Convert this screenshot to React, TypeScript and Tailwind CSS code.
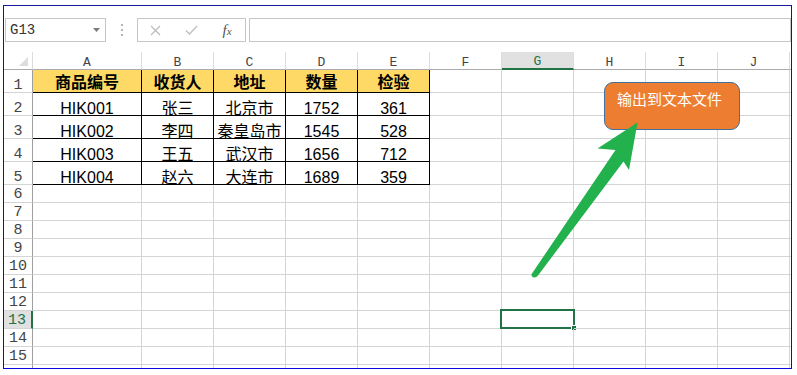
import React from 'react';

const COLS = ['A', 'B', 'C', 'D', 'E', 'F', 'G', 'H', 'I', 'J'];
const W = ['w-[109px]', 'w-[72px]', 'w-[72px]', 'w-[72px]', 'w-[72px]', 'w-[72px]', 'w-[72px]', 'w-[72px]', 'w-[72px]', 'w-[72px]'];

const HEAD = ['商品编号', '收货人', '地址', '数量', '检验'];
const DATA = [
  ['HIK001', '张三', '北京市', '1752', '361'],
  ['HIK002', '李四', '秦皇岛市', '1545', '528'],
  ['HIK003', '王五', '武汉市', '1656', '712'],
  ['HIK004', '赵六', '大连市', '1689', '359'],
];

const isCJK = (s: string) => /[\u4e00-\u9fff]/.test(s);

function RowHeader({ n, tall }: { n: number; tall: boolean }) {
  const sel = n === 13;
  return (
    <div
      className={
        'w-[29px] shrink-0 border-b border-b-[#d4d4d4] flex items-end justify-center [font-family:Liberation_Mono,monospace] text-[15px] leading-[10px] ' +
        (sel
          ? 'bg-[#e1e1e1] border-r-2 border-r-[#217346] text-[#217346] pr-[1px]'
          : 'border-r border-r-[#9f9f9f] text-[#444444]') +
        (tall ? ' pb-[1px]' : ' pb-[2px]')
      }
    >
      {n <= 15 ? n : ''}
    </div>
  );
}

function Cell({ ci, row, text }: { ci: number; row: number; text?: string }) {
  const inTable = row >= 1 && row <= 5 && ci <= 4;
  const isHead = row === 1 && ci <= 4;
  const border = inTable ? 'border-black' : 'border-[#d4d4d4]';
  const selected = row === 13 && ci === 6;
  return (
    <div
      className={
        W[ci] +
        ' shrink-0 border-r border-b relative flex justify-center ' +
        border +
        (isHead ? ' bg-[#ffd966] items-center' : ' items-end')
      }
    >
      {text !== undefined &&
        (isHead ? (
          <span className="[font-family:Noto_Sans_CJK_SC,sans-serif] font-bold text-[16px] leading-[16px] text-black">
            {text}
          </span>
        ) : isCJK(text) ? (
          <span className="[font-family:Noto_Sans_CJK_SC,sans-serif] text-[16px] leading-[16px] text-black">
            {text}
          </span>
        ) : (
          <span className="[font-family:Liberation_Sans,sans-serif] text-[16px] leading-[13px] text-black">
            {text}
          </span>
        ))}
      {selected && (
        <div className="absolute left-[-2px] top-[-2px] w-[75px] h-[20px] border-2 border-[#217346]">
          <div className="absolute right-[-4px] bottom-[-4px] w-[6px] h-[6px] bg-[#217346] border border-white" />
        </div>
      )}
    </div>
  );
}

function GridRow({ row }: { row: number }) {
  const tall = row <= 5;
  const rowData = row === 1 ? HEAD : row >= 2 && row <= 5 ? DATA[row - 2] : [];
  return (
    <div className={'flex shrink-0 ' + (tall ? 'h-[23px]' : 'h-[18px]')}>
      <RowHeader n={row} tall={tall} />
      {COLS.map((c, ci) => (
        <Cell key={c} ci={ci} row={row} text={rowData[ci]} />
      ))}
      <div className="flex-1 border-b border-[#d4d4d4]" />
    </div>
  );
}

export default function App() {
  const rows = Array.from({ length: 16 }, (_, i) => i + 1);
  return (
    <div className="relative w-[797px] h-[375px] bg-white overflow-hidden pt-[5px] pl-[3px]">
      <div className="w-[789px] h-[364px] border border-[#0a0ae0] border-t-[#18189c] overflow-hidden flex flex-col">
        {/* formula bar */}
        <div className="mt-[12px] flex h-[24px] shrink-0">
          <div className="ml-[1px] w-[101px] border border-[#c6c6c6] flex items-center justify-between pl-[4px] pr-[5px]">
            <span className="[font-family:Liberation_Mono,monospace] text-[14px] leading-none text-[#333333]">G13</span>
            <svg width="7" height="4" viewBox="0 0 7 4">
              <path d="M0 0h7l-3.5 4z" fill="#7a7a7a" />
            </svg>
          </div>
          <div className="w-[31px] flex flex-col items-center justify-center gap-[3px]">
            <div className="w-[2px] h-[2px] bg-[#b5b5b5]" />
            <div className="w-[2px] h-[2px] bg-[#b5b5b5]" />
            <div className="w-[2px] h-[2px] bg-[#b5b5b5]" />
          </div>
          <div className="w-[109px] border border-[#c6c6c6] flex">
            <div className="w-[34px] flex items-center justify-center">
              <svg width="11" height="11" viewBox="0 0 11 11">
                <path d="M1 1L10 10M10 1L1 10" stroke="#bcbcbc" strokeWidth="1.3" />
              </svg>
            </div>
            <div className="w-[38px] flex items-center justify-center">
              <svg width="13" height="10" viewBox="0 0 13 10">
                <path d="M1 5.5L4.5 9L12 1" stroke="#c4c4c4" strokeWidth="1.6" fill="none" />
              </svg>
            </div>
            <div className="w-[34px] flex items-center justify-center">
              <span className="[font-family:Liberation_Serif,serif] italic text-[15px] leading-none text-[#555555]">
                f<span className="text-[11px]">x</span>
              </span>
            </div>
          </div>
          <div className="w-[3px]" />
          <div className="flex-1 border border-[#c6c6c6]" />
        </div>
        <div className="h-[10px] shrink-0" />
        {/* column headers */}
        <div className="flex h-[18px] shrink-0">
          <div className="w-[29px] shrink-0 border-r border-b border-r-[#dcdcdc] border-b-[#ababab] relative">
            <svg className="absolute left-0 top-0" width="28" height="17" viewBox="0 0 28 17">
              <path d="M24 5V14H15Z" fill="#dcdcdc" />
            </svg>
          </div>
          {COLS.map((c, ci) => (
            <div
              key={c}
              className={
                W[ci] +
                ' shrink-0 border-r border-r-[#dcdcdc] flex items-center justify-center pt-[3px] [font-family:Liberation_Mono,monospace] text-[13px] leading-none ' +
                (c === 'G'
                  ? 'bg-[#e1e1e1] border-b-2 border-b-[#217346] text-[#217346]'
                  : 'border-b border-b-[#ababab] text-[#444444]')
              }
            >
              {c}
            </div>
          ))}
          <div className="flex-1 border-b border-b-[#ababab]" />
        </div>
        {rows.map((r) => (
          <GridRow key={r} row={r} />
        ))}
      </div>

      {/* callout */}
      <div className="absolute left-[604px] top-[82px] w-[136px] h-[48px] rounded-[9px] bg-[#ed7d31] border border-[#41719c] pl-[12px] pt-[8px] [font-family:Noto_Sans_CJK_SC,sans-serif] text-[15px] leading-[15px] text-white">
        输出到文本文件
      </div>

      {/* arrow */}
      <svg className="absolute left-0 top-0 pointer-events-none" width="797" height="375" viewBox="0 0 797 375">
        <path
          d="M637.5 122.5 L629 170 L623.5 161.5 L538 275.5 Q535 279 532 276.5 Q531 275 532 273.5 L615.5 150 L597.5 148.5 Z"
          fill="#22b14c"
        />
      </svg>
    </div>
  );
}
